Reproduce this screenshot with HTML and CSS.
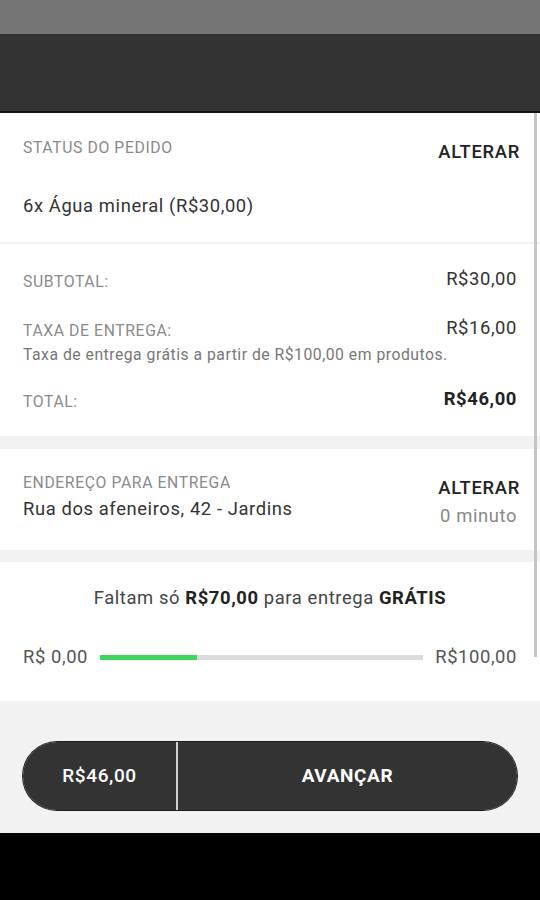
FILE: index.html
```html
<!DOCTYPE html>
<html lang="pt-BR">

<head>
  <meta charset="UTF-8">
  <meta name="viewport" content="width=device-width, initial-scale=1.0">
  <title>Carrinho</title>
  <link rel="stylesheet" href="styles.css">
</head>

<body>
  <div class="screen">
    <div class="status-bar"></div>
    <div class="app-bar"></div>

    <div class="content">
      <div class="scroll-thumb"></div>

      <div class="section order">
        <div class="row-top">
          <span class="label">STATUS DO PEDIDO</span>
          <button class="link">ALTERAR</button>
        </div>
        <p class="item">6x Água mineral (R$30,00)</p>
      </div>

      <div class="section totals">
        <div class="line">
          <span class="label">SUBTOTAL:</span>
          <span class="value">R$30,00</span>
        </div>
        <div class="line fee">
          <span class="label">TAXA DE ENTREGA:</span>
          <span class="value">R$16,00</span>
        </div>
        <p class="note">Taxa de entrega grátis a partir de R$100,00 em produtos.</p>
        <div class="line total">
          <span class="label">TOTAL:</span>
          <span class="value strong">R$46,00</span>
        </div>
      </div>

      <div class="section address">
        <div class="address-info">
          <span class="label">ENDEREÇO PARA ENTREGA</span>
          <p class="street">Rua dos afeneiros, 42 - Jardins</p>
        </div>
        <div class="address-side">
          <button class="link">ALTERAR</button>
          <p class="eta">0 minuto</p>
        </div>
      </div>

      <div class="section free-shipping">
        <p class="headline">Faltam só <b>R$70,00</b> para entrega <b>GRÁTIS</b></p>
        <div class="progress-row">
          <span class="amount">R$ 0,00</span>
          <div class="progress">
            <div class="progress-fill" style="width: 30%"></div>
          </div>
          <span class="amount">R$100,00</span>
        </div>
      </div>
    </div>

    <div class="footer">
      <div class="checkout">
        <span class="checkout-total">R$46,00</span>
        <button class="checkout-next">AVANÇAR</button>
      </div>
    </div>

    <div class="nav-bar"></div>
  </div>
</body>

</html>
```

FILE: styles.css
```css
body {
  font-family: Roboto, "Noto Sans", Arial, sans-serif;
  margin: 0;
  padding: 0;
  background-color: #f2f2f2;
  letter-spacing: 0.6px;
}

.screen {
  width: 540px;
  height: 900px;
  display: flex;
  flex-direction: column;
  overflow: hidden;
}

.status-bar {
  height: 34px;
  background-color: #757575;
}

.app-bar {
  height: 77px;
  background-color: #333;
  border-bottom: 2px solid #161616;
}

.content {
  position: relative;
}

.scroll-thumb {
  position: absolute;
  top: 0;
  right: 3px;
  width: 3px;
  height: 544px;
  background-color: #c4c4c4;
}

.section {
  background-color: #fff;
  padding: 0 23px;
}

p {
  margin: 0;
}

.label {
  font-size: 15.75px;
  line-height: 18px;
  color: #8a8a8a;
}

.link {
  border: none;
  background: none;
  padding: 0;
  font-family: inherit;
  font-size: 18.4px;
  line-height: 20px;
  font-weight: 500;
  color: #222;
  letter-spacing: 0.7px;
  margin-right: -3px;
}

/* status */
.order {
  padding-top: 26px;
  padding-bottom: 24px;
  border-bottom: 2px solid #f0f0f0;
}

.row-top {
  display: flex;
  justify-content: space-between;
  align-items: flex-start;
}

.row-top .link {
  margin-top: 3px;
}

.item {
  margin-top: 32px;
  font-size: 18.4px;
  line-height: 24px;
  color: #333;
}

/* totals */
.totals {
  padding-top: 25px;
  padding-bottom: 21px;
}

.line {
  display: flex;
  justify-content: space-between;
  align-items: flex-start;
}

.line .label {
  line-height: 26px;
}

.value {
  font-size: 18.4px;
  line-height: 20px;
  color: #333;
}

.value.strong {
  font-weight: 700;
  color: #222;
}

.fee {
  margin-top: 23px;
}

.note {
  margin-top: 1px;
  font-size: 15.75px;
  line-height: 20px;
  color: #777;
  letter-spacing: 0.5px;
}

.total {
  margin-top: 24px;
}

/* address */
.address {
  margin-top: 13px;
  padding-top: 25px;
  padding-bottom: 22px;
  display: flex;
  justify-content: space-between;
  align-items: flex-start;
}

.address-info {
  display: flex;
  flex-direction: column;
}

.street {
  margin-top: 5px;
  font-size: 18.4px;
  line-height: 24px;
  color: #333;
}

.address-side {
  display: flex;
  flex-direction: column;
  align-items: flex-end;
  padding-top: 4px;
}

.eta {
  margin-top: 6px;
  font-size: 18.4px;
  line-height: 24px;
  color: #888;
}

/* free shipping */
.free-shipping {
  margin-top: 12px;
  padding-top: 24px;
  padding-bottom: 32px;
}

.headline {
  text-align: center;
  font-size: 18.4px;
  line-height: 24px;
  color: #444;
}

.headline b {
  color: #222;
}

.progress-row {
  margin-top: 35px;
  display: flex;
  align-items: center;
  gap: 12px;
}

.amount {
  font-size: 18.4px;
  line-height: 24px;
  color: #555;
}

.progress {
  flex: 1;
  height: 5px;
  background-color: #dcdcdc;
}

.progress-fill {
  height: 100%;
  background-color: #3dd65a;
}

/* footer */
.footer {
  flex: 1;
  padding: 41px 23px 0;
}

.checkout {
  display: flex;
  height: 68px;
  border-radius: 34px;
  overflow: hidden;
  background-color: #d0d0d0;
  box-shadow: 0 0 0 1px #1e1e1e;
}

.checkout-total {
  width: 153px;
  display: flex;
  align-items: center;
  justify-content: center;
  padding-bottom: 2px;
  background-color: #333;
  color: #fff;
  font-size: 19px;
  font-weight: 500;
}

.checkout-next {
  flex: 1;
  margin-left: 2px;
  padding-bottom: 2px;
  border: none;
  background-color: #333;
  color: #fff;
  font-family: inherit;
  font-size: 19px;
  font-weight: 700;
  letter-spacing: 0.6px;
  cursor: pointer;
}

.nav-bar {
  height: 67px;
  background-color: #000;
}
```
